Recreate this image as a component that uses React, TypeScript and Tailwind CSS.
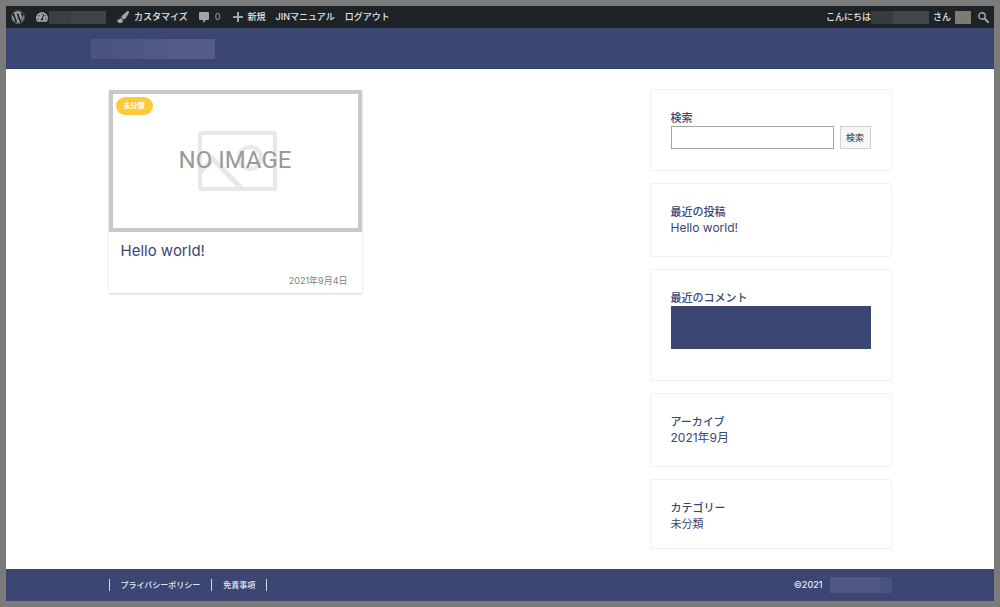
import type { ReactNode } from "react";
import clsx from "clsx";
import { FaPaintBrush, FaTachometerAlt, FaWordpress } from "react-icons/fa";

export default function App() {
    return (
        <div className="min-h-screen bg-[#7b7b7b] p-1.5 flex flex-col font-[Inter,'Noto_Sans_CJK_JP',sans-serif]">
            <AdminBar />
            <header className="bg-[#3b4673] border-b border-[#2f3a70] pt-[11px] pb-[9px]">
                <div className="max-w-[818px] mx-auto">
                    <a href="#" aria-label="ホーム" className="flex w-[124px] h-5">
                        <span className="w-[26px] bg-[#4a547f]" />
                        <span className="w-[26px] bg-[#4d5681]" />
                        <span className="w-6 bg-[#505983]" />
                        <span className="flex-1 bg-[#545c86]" />
                    </a>
                </div>
            </header>
            <main className="flex-1 bg-white py-5">
                <div className="max-w-[783px] mx-auto flex items-start gap-[23px]">
                    <div className="flex-1 grid grid-cols-2 gap-3 pt-px">
                        <PostCard title="Hello world!" category="未分類" date="2021年9月4日" />
                    </div>
                    <Sidebar />
                </div>
            </main>
            <Footer />
        </div>
    );
}

function AdminBar() {
    return (
        <nav className="h-[22px] bg-[#1d2327] flex items-center justify-between px-[5px] text-[9px] leading-4 font-medium text-[#e4e4e4]">
            <div className="flex items-center">
                <a href="#" aria-label="WordPress" className="text-[#a0a5aa]"><FaWordpress size={14} /></a>
                <a href="#" aria-label="サイト" className="ml-[11px] flex items-center gap-px text-[#a0a5aa]">
                    <FaTachometerAlt size={12} />
                    <span className="flex h-[13px] w-[57px]">
                        <span className="w-[22px] bg-[#3a3f43]" />
                        <span className="flex-1 bg-[#3f4447]" />
                    </span>
                </a>
                <a href="#" className="ml-[11px] flex items-center gap-[5px]">
                    <FaPaintBrush size={12} className="text-[#a0a5aa]" />
                    カスタマイズ
                </a>
                <a href="#" className="ml-[11px] flex items-center gap-1.5 text-[#8c9196]">
                    <svg viewBox="0 0 10 11" className="w-[10px] h-[11px] fill-[#a0a5aa]">
                        <path d="M1 0h8a1 1 0 0 1 1 1v6a1 1 0 0 1-1 1H7L4 11V8H1a1 1 0 0 1-1-1V1a1 1 0 0 1 1-1z" />
                    </svg>
                    0
                </a>
                <a href="#" className="ml-3 flex items-center gap-[5px]">
                    <svg viewBox="0 0 10 10" className="size-[10px] fill-[#a0a5aa]">
                        <path d="M4 0h2v4h4v2H6v4H4V6H0V4h4z" />
                    </svg>
                    新規
                </a>
                <a href="#" className="ml-[10px]">JINマニュアル</a>
                <a href="#" className="ml-[10px]">ログアウト</a>
            </div>
            <div className="flex items-center">
                <a href="#" className="flex items-center">
                    こんにちは
                    <span className="flex h-[13px] w-[58px] mr-1">
                        <span className="w-[22px] bg-[#373c40]" />
                        <span className="flex-1 bg-[#424649]" />
                    </span>
                    さん
                    <span className="ml-1 w-4 h-[13px] bg-[#7f7a70]" />
                </a>
                <button type="button" aria-label="検索" className="ml-[7px]">
                    <svg viewBox="0 0 11 11" className="size-[11px] fill-none stroke-[#a0a5aa]">
                        <circle cx="4" cy="4" r="3.2" strokeWidth="1.4" />
                        <path d="M6.6 6.6L10 10" strokeWidth="2" strokeLinecap="round" />
                    </svg>
                </button>
            </div>
        </nav>
    );
}

function PostCard({ title, category, date }: { title: string; category: string; date: string }) {
    return (
        <article className="relative bg-white shadow-[0_1px_2px_#00000033]">
            <a href="#" className="block">
                <div className="border-4 border-[#c9c9c9]">
                    <NoImage />
                </div>
                <h2 className="px-3 pt-[7px] text-[15px] leading-6 text-[#3b4673]">{title}</h2>
            </a>
            <p className="px-[14px] pt-[10px] pb-1 text-right text-[9px] leading-4 text-[#808080]">{date}</p>
            <a href="#" className="absolute left-[7px] top-[7px] h-[18px] px-2 rounded-full bg-[#ffc93e] text-[7px] leading-[18px] font-bold text-white">
                {category}
            </a>
        </article>
    );
}

function NoImage() {
    return (
        <svg viewBox="0 0 245 134" className="block w-full">
            <g fill="none" stroke="#e8e8e8" strokeWidth="4">
                <rect x="87" y="39" width="75" height="56" rx="1" />
                <circle cx="137" cy="64" r="11" />
                <path d="M87 78L100 65L129 95" strokeWidth="5" />
            </g>
            <text x="122" y="74" textAnchor="middle" className="fill-[#999999] font-[Roboto] text-[24px]">
                NO IMAGE
            </text>
        </svg>
    );
}

function Widget({ title, children, className }: { title: ReactNode; children: ReactNode; className?: string }) {
    return (
        <section className={clsx("border border-[#f2f2f2] rounded-xs px-5 pt-5 text-[11px] leading-4 text-[#3b4673]", className)}>
            <h2 className="font-medium">{title}</h2>
            {children}
        </section>
    );
}

function Sidebar() {
    return (
        <aside className="w-[242px] shrink-0 flex flex-col gap-3">
            <Widget title={<label htmlFor="search">検索</label>} className="pb-[21px]">
                <form className="flex gap-1.5" onSubmit={(e) => e.preventDefault()}>
                    <input id="search" type="text" className="flex-1 min-w-0 h-[23px] px-1 border border-[#a5a5a5] bg-white" />
                    <button type="submit" className="h-[23px] w-[31px] border border-[#d0d0d0] bg-[#f7f7f7] text-[9px] text-[#333333]">検索</button>
                </form>
            </Widget>
            <Widget title="最近の投稿" className="pb-5">
                <a href="#" className="block text-[12px] leading-4">Hello world!</a>
            </Widget>
            <Widget title="最近のコメント" className="pb-[31px]">
                <div className="h-[43px] bg-[#3b4673]" />
            </Widget>
            <Widget title="アーカイブ" className="pb-5">
                <a href="#" className="block text-[12px] leading-4">2021年9月</a>
            </Widget>
            <Widget title="カテゴリー" className="pb-4">
                <a href="#" className="block">未分類</a>
            </Widget>
        </aside>
    );
}

function Footer() {
    return (
        <footer className="h-8 bg-[#3b4673] text-[8px] leading-3 font-medium text-[#e8eaf2]">
            <div className="max-w-[783px] h-full mx-auto flex items-center justify-between">
                <ul className="flex border-l border-[#d5d8e4]">
                    <li className="px-[11px] border-r border-[#d5d8e4]"><a href="#">プライバシーポリシー</a></li>
                    <li className="px-[11px] border-r border-[#d5d8e4]"><a href="#">免責事項</a></li>
                </ul>
                <p className="flex items-center gap-[7px] text-[9px]">
                    ©2021
                    <span className="flex w-[62px] h-4">
                        <span className="w-[50px] bg-[#4f5882]" />
                        <span className="flex-1 bg-[#4a537e]" />
                    </span>
                </p>
            </div>
        </footer>
    );
}
